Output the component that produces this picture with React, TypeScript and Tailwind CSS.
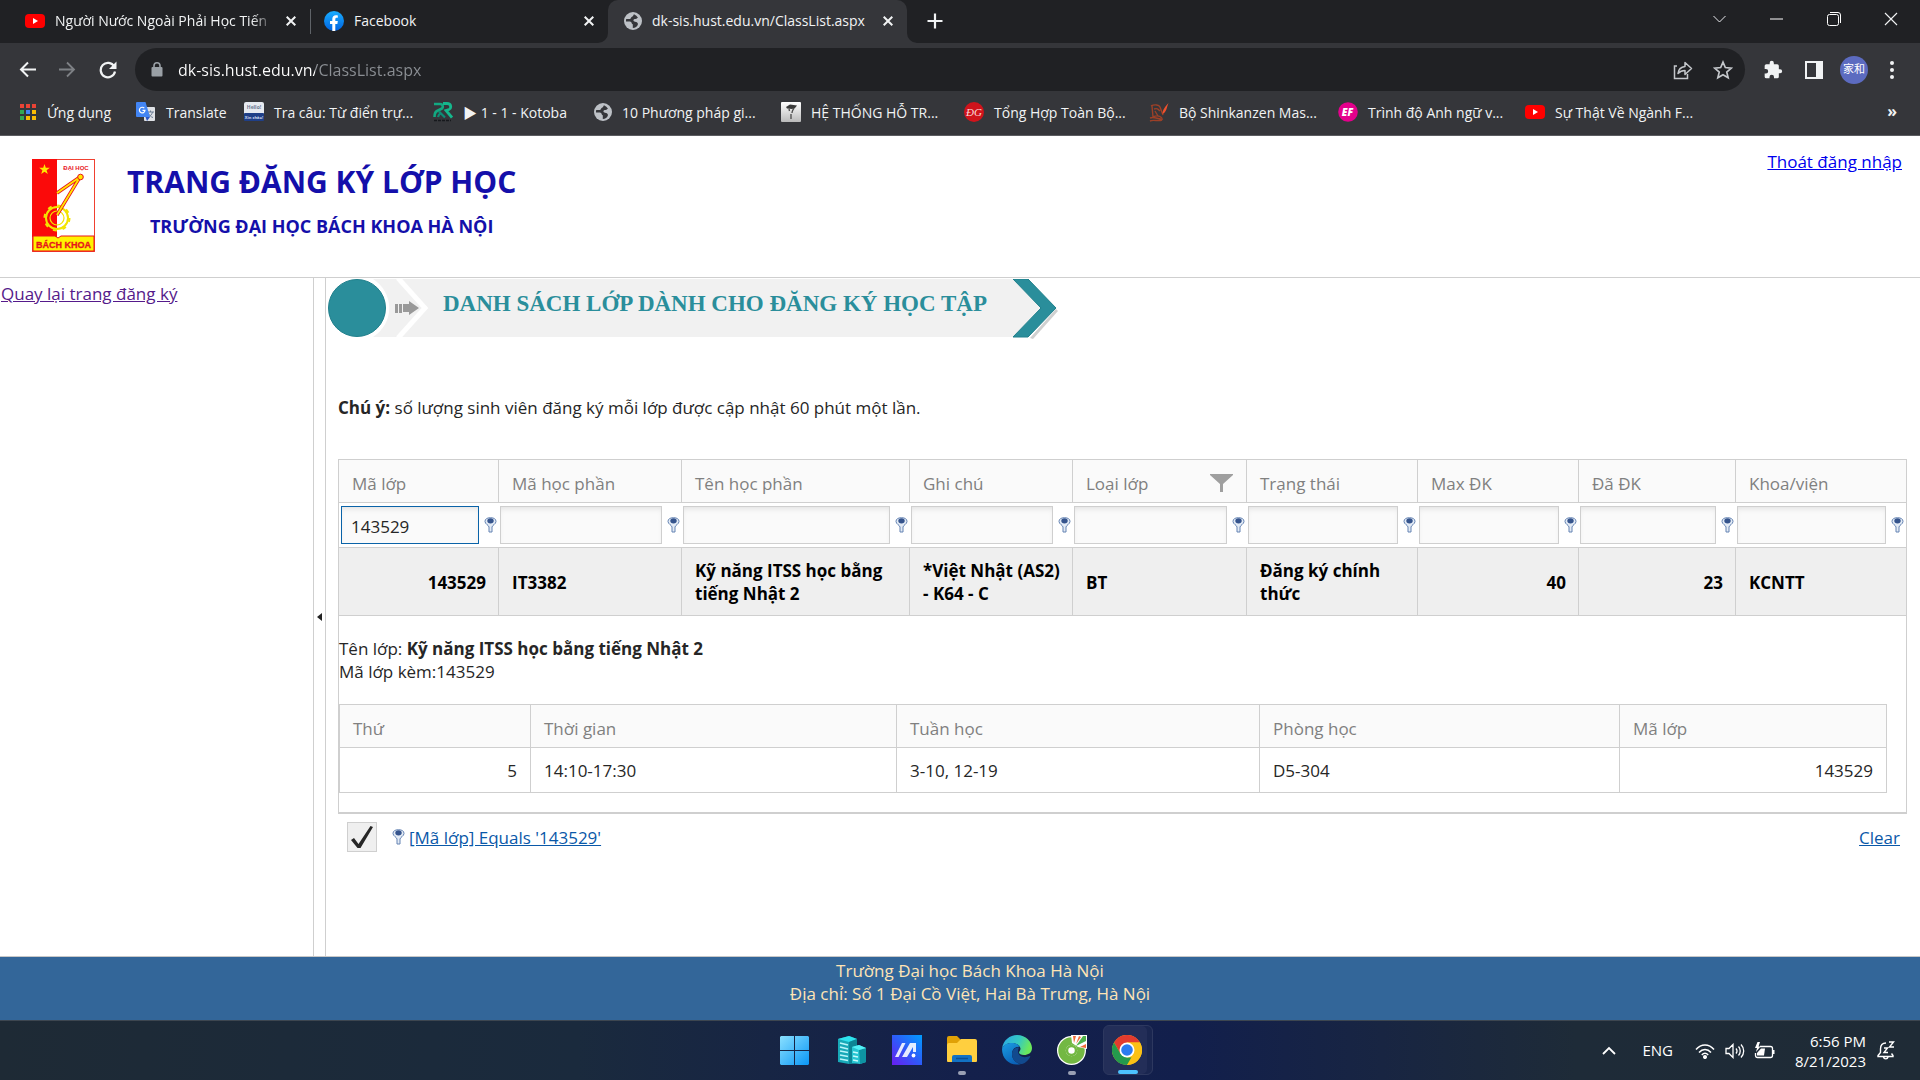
import React from 'react';

const UI = "font-['Open_Sans','Noto_Sans_CJK_JP',sans-serif]";

function YouTubeIcon() {
  return (
    <svg width="20" height="16" viewBox="0 0 20 16" className="shrink-0">
      <rect x="0" y="1" width="20" height="14" rx="4" fill="#f00" />
      <path d="M8 5l5 3-5 3z" fill="#fff" />
    </svg>
  );
}

function FacebookIcon() {
  return (
    <svg width="20" height="20" viewBox="0 0 20 20" className="shrink-0">
      <defs>
        <linearGradient id="fb" x1="0" y1="0" x2="0" y2="1">
          <stop offset="0" stopColor="#19aeff" />
          <stop offset="1" stopColor="#0062e0" />
        </linearGradient>
      </defs>
      <circle cx="10" cy="10" r="10" fill="url(#fb)" />
      <path
        d="M8.3 20v-7H6v-3h2.300V8c0-2.500 1.400-3.800 3.600-3.800.9 0 1.900.2 1.900.2v2.400h-1.100c-1.100 0-1.400.7-1.400 1.400V10h2.500l-.4 3h-2.100v7z"
        fill="#fff"
      />
    </svg>
  );
}

function GlobeIcon() {
  return (
    <svg width="18" height="18" viewBox="0 0 18 18" className="shrink-0">
      <circle cx="9" cy="9" r="9" fill="#bdc1c6" />
      <path
        d="M10 2.200c-1 1-.5 1.800-2 2.600-1.300.6-.8 1.700-2 2.100-1.400.4-2.300 0-3.800 0A7 7 0 0 0 2 9.500c1.500.2 4-.3 5 .5 1.200 1 .4 2 1.800 2.300V16c2.700 0 4.300-1.500 5-3.300.5-1.500-.5-2.400-1.800-2.700-1.500-.4-2-.4-2.500-1.300-.5-1 .7-1.700 2-1.700 1.500 0 1.300-1 2.500-1.200A7.500 7.500 0 0 0 10 2.200z"
        fill="#35363a"
      />
    </svg>
  );
}

function AppsIcon() {
  const colors = ['#ea4335', '#ea4335', '#ea4335', '#34a853', '#4285f4', '#fbbc04', '#34a853', '#fbbc04', '#fbbc04'];
  return (
    <svg width="18" height="18" viewBox="0 0 18 18" className="shrink-0">
      {colors.map((c, i) => (
        <rect key={i} x={1 + (i % 3) * 6} y={1 + Math.floor(i / 3) * 6} width="4" height="4" fill={c} />
      ))}
    </svg>
  );
}

function TranslateIcon() {
  return (
    <svg width="20" height="20" viewBox="0 0 20 20" className="shrink-0">
      <rect x="8" y="5" width="11" height="14" rx="1" fill="#dfe2e6" />
      <path d="M11 10h7M14.500 8.500V10M16.500 10c-.5 2.500-2.500 4.500-4.500 5.500M12.500 11.500c1 2 2.500 3.500 4.500 4" stroke="#6b7c93" strokeWidth="1" fill="none" />
      <path d="M1 0h8.500l4.500 15H1a1 1 0 0 1-1-1V1a1 1 0 0 1 1-1z" fill="#4285f4" />
      <path d="M9.500 15H14l-3 4z" fill="#2a56c6" />
      <path d="M8.300 6.200A2.800 2.800 0 1 0 9 8.300H6.500" stroke="#fff" strokeWidth="1.200" fill="none" />
    </svg>
  );
}

function HelloIcon() {
  return (
    <svg width="20" height="20" viewBox="0 0 20 20" className="shrink-0">
      <rect x="0" y="0" width="20" height="13" rx="2" fill="#e6eaf0" />
      <rect x="0" y="11" width="20" height="8" rx="1" fill="#1f3f87" />
      <text x="10" y="7" fontSize="5" textAnchor="middle" fill="#6a7890" fontFamily="Open Sans" fontWeight="700">Hello!</text>
      <text x="10" y="17" fontSize="4" textAnchor="middle" fill="#d6def0" fontFamily="Open Sans" fontWeight="700">Xin chào!</text>
    </svg>
  );
}

function KotobaIcon() {
  return (
    <svg width="20" height="20" viewBox="0 0 20 20" className="shrink-0" fill="none">
      <path d="M1 2h6c3 0 4 3.500 1 5L4 9c-2 1-2.500 3-2.500 6" stroke="#12a981" strokeWidth="2.600" />
      <path d="M10 1.500h4c4.500 0 4.500 5 2 6L13 8.500l6 7" stroke="#15b88d" strokeWidth="2.800" />
      <path d="M6 9.500l6 6M5 15c.5-2 1-3 2.500-3.500" stroke="#0d8d76" strokeWidth="2.200" />
      <path d="M1 18.500h17" stroke="#16181c" strokeWidth="1.500" strokeDasharray="3 1" />
    </svg>
  );
}

function SupportIcon() {
  return (
    <svg width="20" height="20" viewBox="0 0 20 20" className="shrink-0">
      <defs>
        <linearGradient id="sup" x1="0" y1="0" x2="0" y2="1">
          <stop offset="0" stopColor="#fff" />
          <stop offset="1" stopColor="#b9b9b9" />
        </linearGradient>
      </defs>
      <rect width="20" height="20" rx="1" fill="url(#sup)" />
      <path d="M5 5l4-2.500 7 1-2 2.500-3 1-5-.5z" fill="#3a3a3a" />
      <path d="M8 7l.5 2M13 6c-1 2-2 3-2 5M10 12v5" stroke="#4a4a4a" strokeWidth="1.300" fill="none" />
    </svg>
  );
}

function DgIcon() {
  return (
    <svg width="20" height="20" viewBox="0 0 20 20" className="shrink-0">
      <circle cx="10" cy="10" r="10" fill="#d0131b" />
      <text x="10" y="14" fontSize="11" textAnchor="middle" fill="#fbd9d9" fontFamily="Liberation Serif" fontStyle="italic">ĐG</text>
    </svg>
  );
}

function ShinkanzenIcon() {
  return (
    <svg width="20" height="20" viewBox="0 0 20 20" className="shrink-0" fill="none">
      <path d="M2 4c4-2 8-1 9 1l3 8M3 4l1 11c4-2 7-1 9 1M5 7c3-1 4 0 6 2M1 16c5-2 8 2 13 1M1 19c4-2 8 1 12-1M6 9l3 5" stroke="#9c4027" strokeWidth="1.400" />
      <path d="M19.500 1c-2 5-2 9-6 11 0-4 3-8 6-11z" fill="#f0512d" />
    </svg>
  );
}

function EfIcon() {
  return (
    <svg width="20" height="20" viewBox="0 0 20 20" className="shrink-0">
      <circle cx="10" cy="10" r="9.800" fill="#e4008c" />
      <text x="9.500" y="13.500" fontSize="10" textAnchor="middle" fill="#fff" fontFamily="Open Sans" fontStyle="italic" fontWeight="800">EF</text>
    </svg>
  );
}

function Cross({ size = 10, stroke = 2 }: { size?: number; stroke?: number }) {
  return (
    <svg width={size} height={size} viewBox="0 0 10 10" stroke="#f1f3f4" strokeWidth={stroke} fill="none">
      <path d="M0.700 0.700l8.600 8.600M9.300 0.700l-8.600 8.600" />
    </svg>
  );
}

function TabStrip() {
  return (
    <div className="flex h-[43px] items-stretch bg-[#202124] text-[14px] text-[#f1f3f4]">
      <div className="flex w-[310px] items-center pb-[2px] pl-[25px]">
        <YouTubeIcon />
        <span className="ml-[10px] w-[219px] whitespace-nowrap [mask-image:linear-gradient(to_right,#000_90%,transparent)]">
          Người Nước Ngoài Phải Học Tiến
        </span>
        <button aria-label="Close tab" className="ml-3 flex">
          <Cross />
        </button>
      </div>
      <div className="my-[9px] w-px bg-[#5f6368]" />
      <div className="flex w-[297px] items-center pr-[14px] pb-[2px] pl-[13px]">
        <FacebookIcon />
        <span className="ml-[10px] flex-1">Facebook</span>
        <button aria-label="Close tab" className="flex">
          <Cross />
        </button>
      </div>
      <div className="relative flex w-[299px] items-center rounded-t-[10px] bg-[#35363a] pr-[14px] pb-[2px] pl-4">
        <svg className="absolute bottom-0 -left-[10px]" width="10" height="10"><path d="M10 0v10H0A10 10 0 0 0 10 0z" fill="#35363a" /></svg>
        <svg className="absolute -right-[10px] bottom-0" width="10" height="10"><path d="M0 0v10h10A10 10 0 0 1 0 0z" fill="#35363a" /></svg>
        <GlobeIcon />
        <span className="ml-[10px] flex-1">dk-sis.hust.edu.vn/ClassList.aspx</span>
        <button aria-label="Close tab" className="flex">
          <Cross />
        </button>
      </div>
      <button aria-label="New tab" className="flex items-center px-5 pb-[2px]">
        <svg width="16" height="16" viewBox="0 0 16 16" stroke="#f1f3f4" strokeWidth="2.200"><path d="M8 0.500v15M0.500 8h15" /></svg>
      </button>
      <div className="mr-px ml-auto flex h-[37px] items-center">
        <button aria-label="Search tabs" className="flex w-[58px] justify-center">
          <svg width="13" height="8" viewBox="0 0 13 8" stroke="#e8eaed" fill="none"><path d="M0.500 1l6 6 6-6" /></svg>
        </button>
        <button aria-label="Minimize" className="flex w-[57px] justify-center">
          <svg width="13" height="2" viewBox="0 0 13 2"><path d="M0 1h13" stroke="#fff" /></svg>
        </button>
        <button aria-label="Restore" className="flex w-[57px] justify-center">
          <svg width="14" height="14" viewBox="0 0 14 14" stroke="#fff" fill="none"><rect x="0.500" y="2.500" width="11" height="11" rx="2" /><path d="M3 0.500h8q2.500 0 2.500 2.500v8" /></svg>
        </button>
        <button aria-label="Close" className="flex w-[57px] justify-center">
          <Cross size={14} stroke={0.8} />
        </button>
      </div>
    </div>
  );
}

function Toolbar() {
  return (
    <div className="flex h-[53px] items-center bg-[#35363a]">
      <div className="flex w-[135px] items-center">
        <button aria-label="Back" className="ml-[19px]">
          <svg width="17" height="17" viewBox="0 0 17 17" stroke="#f1f3f4" strokeWidth="2" fill="none"><path d="M17 8.500H2M9 1.500l-7 7 7 7" /></svg>
        </button>
        <button aria-label="Forward" className="ml-[23px]">
          <svg width="17" height="17" viewBox="0 0 17 17" stroke="#7e8185" strokeWidth="1.800" fill="none"><path d="M0 8.500h15M8 1.500l7 7-7 7" /></svg>
        </button>
        <button aria-label="Reload" className="ml-[23px]">
          <svg width="18" height="18" viewBox="0 0 18 18" fill="none"><path d="M15.200 5.500A7.200 7.200 0 1 0 16 10.500" stroke="#f1f3f4" strokeWidth="2.200" /><path d="M17.500 0.500v7.500H10z" fill="#f1f3f4" /></svg>
        </button>
      </div>
      <div className="flex h-[43px] flex-1 items-center rounded-full bg-[#202124] pr-[12px] pl-4">
        <svg width="12" height="15" viewBox="0 0 12 15" className="shrink-0"><rect x="0.500" y="5" width="11" height="9.500" rx="1" fill="#9aa0a6" /><path d="M3 6V3.800a3 3 0 0 1 6 0V6" stroke="#9aa0a6" strokeWidth="1.600" fill="none" /></svg>
        <input
          aria-label="Address"
          defaultValue="dk-sis.hust.edu.vn/ClassList.aspx"
          className="ml-[15px] min-w-0 flex-1 bg-[linear-gradient(to_right,#fff_137px,#8b8f94_137px)] bg-clip-text text-[16px] leading-6 text-transparent caret-white outline-none"
        />
        <button aria-label="Share">
          <svg width="20" height="20" viewBox="0 0 20 20" stroke="#c4c7cb" strokeWidth="1.500" fill="none"><path d="M4 6H1.500v12.500h13V14" /><path d="M5 13.500c.5-4.500 3-6.500 7-7V2.500l6.500 6-6.500 6v-4c-3 0-5 .8-7 3z" strokeLinejoin="round" /></svg>
        </button>
        <button aria-label="Bookmark this page" className="ml-5">
          <svg width="20" height="20" viewBox="0 0 24 24" stroke="#c4c7cb" strokeWidth="2" fill="none"><path d="M12 2.500l2.800 6.600 7.200.6-5.500 4.700 1.700 7L12 17.700l-6.200 3.700 1.700-7L2 9.700l7.200-.6z" /></svg>
        </button>
      </div>
      <button aria-label="Extensions" className="ml-[18px]">
        <svg width="20" height="20" viewBox="0 0 24 24" fill="#f1f3f4"><path d="M20.500 11H19V7a2 2 0 0 0-2-2h-4V3.500a2.500 2.500 0 0 0-5 0V5H4a2 2 0 0 0-2 2v3.800h1.500a2.700 2.700 0 0 1 0 5.400H2V20a2 2 0 0 0 2 2h3.800v-1.500a2.700 2.700 0 0 1 5.400 0V22H17a2 2 0 0 0 2-2v-4h1.500a2.500 2.500 0 0 0 0-5z" /></svg>
      </button>
      <button aria-label="Side panel" className="ml-[22px]">
        <svg width="18" height="18" viewBox="0 0 18 18"><rect x="1" y="1" width="16" height="16" fill="none" stroke="#f1f3f4" strokeWidth="2" /><rect x="11" y="1" width="6" height="16" fill="#f1f3f4" /></svg>
      </button>
      <button className="ml-[17px] flex size-7 items-center justify-center rounded-full bg-[#5c6bc0] text-[11px] text-white">家和</button>
      <button aria-label="Menu" className="mr-[26px] ml-[22px]">
        <svg width="4" height="18" viewBox="0 0 4 18" fill="#f1f3f4"><circle cx="2" cy="2" r="2" /><circle cx="2" cy="9" r="2" /><circle cx="2" cy="16" r="2" /></svg>
      </button>
    </div>
  );
}

const bookmarks = [
  { label: 'Ứng dụng', icon: <AppsIcon />, width: 'w-[117px]' },
  { label: 'Translate', icon: <TranslateIcon />, width: 'w-[108px]' },
  { label: 'Tra câu: Từ điển trự...', icon: <HelloIcon />, width: 'w-[189px]' },
  { label: '▶ 1 - 1 - Kotoba', icon: <KotobaIcon />, width: 'w-[161px]' },
  { label: '10 Phương pháp gi...', icon: <GlobeIcon />, width: 'w-[187px]' },
  { label: 'HỆ THỐNG HỖ TR...', icon: <SupportIcon />, width: 'w-[183px]' },
  { label: 'Tổng Hợp Toàn Bộ...', icon: <DgIcon />, width: 'w-[185px]' },
  { label: 'Bộ Shinkanzen Mas...', icon: <ShinkanzenIcon />, width: 'w-[189px]' },
  { label: 'Trình độ Anh ngữ v...', icon: <EfIcon />, width: 'w-[187px]' },
  { label: 'Sự Thật Về Ngành F...', icon: <YouTubeIcon />, width: 'w-[200px]' },
];

function BookmarkBar() {
  return (
    <div className="flex h-[40px] items-start border-b border-[#5b5c60] bg-[#35363a] pl-[19px] text-[14px] text-[#f1f3f4]">
      {bookmarks.map((b) => (
        <a key={b.label} href="#" className={'flex h-[32px] shrink-0 items-center gap-[10px] whitespace-nowrap ' + b.width}>
          {b.icon}
          {b.label}
        </a>
      ))}
      <button aria-label="More bookmarks" className="mr-[23px] ml-auto h-[30px] text-[16px] font-bold">»</button>
    </div>
  );
}

function UniversityLogo() {
  return (
    <svg width="63" height="93" viewBox="0 0 63 93">
      <rect x="0.500" y="0.500" width="62" height="92" fill="#fff" stroke="#f04030" />
      <path d="M0 0h25v78H0z" fill="#fb0a0a" />
      <path d="M12.500 5l1.300 3.800h4l-3.200 2.400 1.200 3.800-3.300-2.300L9.200 15l1.200-3.800L7.200 8.800h4z" fill="#ffe800" />
      <text x="44" y="11" fontSize="6" textAnchor="middle" fill="#e8141c" fontFamily="Liberation Sans" fontWeight="700">ĐẠI HỌC</text>
      <circle cx="25" cy="59" r="11" fill="none" stroke="#f3e400" strokeWidth="2" />
      <circle cx="25" cy="59" r="12.500" fill="none" stroke="#f3e400" strokeWidth="2" strokeDasharray="4 5.800" />
      <circle cx="25" cy="59" r="7" fill="none" stroke="#f3e400" strokeWidth="1.200" />
      <path d="M25 34l23-16L25 56" fill="none" stroke="#e8141c" strokeWidth="3.400" />
      <path d="M25 34l23-16L25 56" fill="none" stroke="#ffe800" strokeWidth="1.800" />
      <circle cx="48.500" cy="18" r="2.800" fill="#ffe800" stroke="#e8141c" strokeWidth="1" />
      <path d="M1 77h22l3 2 3-2h33v15H1z" fill="#fff200" stroke="#e8141c" strokeWidth="1" />
      <text x="31.500" y="89" fontSize="9" textAnchor="middle" fill="#e8141c" stroke="#e8141c" strokeWidth="0.300" fontFamily="Liberation Sans" fontWeight="700">BÁCH KHOA</text>
    </svg>
  );
}

function PageHeader() {
  return (
    <header className="flex h-[142px] items-start border-b border-[#cfcfcf] bg-white">
      <div className="mt-[23px] ml-8">
        <UniversityLogo />
      </div>
      <div className="ml-8 pt-[23px] text-center font-bold text-[#140faa]">
        <h1 className="text-[30px] leading-[46px]">TRANG ĐĂNG KÝ LỚP HỌC</h1>
        <h2 className="text-[18px] leading-[42px]">TRƯỜNG ĐẠI HỌC BÁCH KHOA HÀ NỘI</h2>
      </div>
      <a href="#" className="mt-[14px] mr-[18px] ml-auto text-[17px] leading-[23px] text-[#0000ee] underline">Thoát đăng nhập</a>
    </header>
  );
}

function Banner() {
  return (
    <div className="flex h-[62px] items-start pt-[1px] pl-px">
      <svg width="102" height="60" viewBox="0 0 102 60" className="shrink-0">
        <path d="M30 0h72v58H30z" fill="#f1f1f1" />
        <circle cx="30" cy="29" r="34" fill="#fff" />
        <path d="M46 0h22l27 29-27 29H46a34 34 0 0 0 0-58z" fill="#f1f1f1" />
        <path d="M71 -1l27 30-27 30" fill="none" stroke="#fff" strokeWidth="5" />
        <circle cx="30" cy="29" r="28.500" fill="#2a8e9b" stroke="#21808c" />
        <path d="M68 25h3v9h-3zM72 25h3v9h-3zM76 25h6v-3l10 7-10 7v-3h-6z" fill="#999" />
      </svg>
      <h3 className="h-[58px] w-[584px] bg-[#f1f1f1] pl-[14px] font-['Liberation_Serif',serif] text-[23px] leading-[50px] font-bold whitespace-nowrap text-[#2a8e9b]">
        DANH SÁCH LỚP DÀNH CHO ĐĂNG KÝ HỌC TẬP
      </h3>
      <svg width="48" height="62" viewBox="0 0 48 62" className="shrink-0">
        <path d="M0 0h3l28 29L3 58H0z" fill="#f1f1f1" />
        <path d="M17 59l26-29 2 2-25 28z" fill="#d0d0d0" />
        <path d="M0 0h15l28 29-28 29H0l28-29z" fill="#2a8e9b" stroke="#21808c" />
      </svg>
    </div>
  );
}

function FilterPin() {
  return (
    <svg width="13" height="16" viewBox="0 0 13 16" className="shrink-0">
      <path d="M1 4.500C1 2 3 0.700 6.500 0.700S12 2 12 4.500C12 7 8 8.500 8 10v5H5v-5C5 8.500 1 7 1 4.500z" fill="#e3ebf5" stroke="#6483b3" />
      <ellipse cx="6.500" cy="3.800" rx="3.200" ry="2.600" fill="#35548d" />
    </svg>
  );
}

const columns = [
  { title: 'Mã lớp', width: 'w-[160px]', value: '143529', right: true },
  { title: 'Mã học phần', width: 'w-[183px]', value: 'IT3382' },
  { title: 'Tên học phần', width: 'w-[228px]', value: 'Kỹ năng ITSS học bằng tiếng Nhật 2' },
  { title: 'Ghi chú', width: 'w-[163px]', value: '*Việt Nhật (AS2) - K64 - C' },
  { title: 'Loại lớp', width: 'w-[174px]', value: 'BT', filter: true },
  { title: 'Trạng thái', width: 'w-[171px]', value: 'Đăng ký chính thức' },
  { title: 'Max ĐK', width: 'w-[161px]', value: '40', right: true },
  { title: 'Đã ĐK', width: 'w-[157px]', value: '23', right: true },
  { title: 'Khoa/viện', width: 'w-[171px]', value: 'KCNTT' },
];

const schedule = [
  { title: 'Thứ', width: 'w-[191px]', value: '5', right: true },
  { title: 'Thời gian', width: 'w-[366px]', value: '14:10-17:30' },
  { title: 'Tuần học', width: 'w-[363px]', value: '3-10, 12-19' },
  { title: 'Phòng học', width: 'w-[360px]', value: 'D5-304' },
  { title: 'Mã lớp', width: 'w-[267px]', value: '143529', right: true },
];

function ScheduleTable() {
  return (
    <div className="mr-[20px]">
      <table className="w-full table-fixed border-collapse">
        <colgroup>
          {schedule.map((c) => (
            <col key={c.title} className={c.width} />
          ))}
        </colgroup>
        <thead>
          <tr className="h-[43px] bg-[#fafafa] text-[#808080]">
            {schedule.map((c) => (
              <th key={c.title} className="border border-[#cfcfcf] px-[13px] pt-1 text-left font-normal">{c.title}</th>
            ))}
          </tr>
        </thead>
        <tbody>
          <tr className="h-[45px]">
            {schedule.map((c) => (
              <td key={c.title} className={'border border-[#cfcfcf] px-[13px] pt-px ' + (c.right ? 'text-right' : 'text-left')}>{c.value}</td>
            ))}
          </tr>
        </tbody>
      </table>
    </div>
  );
}

function ClassTable() {
  return (
    <table className="w-full table-fixed border-collapse text-[17px] leading-[23px]">
      <colgroup>
        {columns.map((c) => (
          <col key={c.title} className={c.width} />
        ))}
      </colgroup>
      <thead>
        <tr className="h-[43px] bg-[#fafafa] text-[#808080]">
          {columns.map((c) => (
            <th key={c.title} className="border border-[#cfcfcf] px-[13px] pt-1 text-left font-normal">
              <div className="flex items-center justify-between">
                {c.title}
                {c.filter && (
                  <button aria-label="Filter">
                    <svg width="23" height="18" viewBox="0 0 23 18"><path d="M0 0h23v1l-10 9v8h-3v-8L0 1z" fill="#9f9f9f" /></svg>
                  </button>
                )}
              </div>
            </th>
          ))}
        </tr>
        <tr className="h-[45px]">
          {columns.map((c, i) => (
            <td key={c.title} className="border-b border-[#cfcfcf] p-0 pl-px first:border-l first:pl-[2px] last:border-r">
              <div className="flex items-center gap-[5px] pr-[2px]">
                <input
                  aria-label={'Filter ' + c.title}
                  defaultValue={i === 0 ? '143529' : ''}
                  className={
                    'h-[38px] min-w-0 flex-1 border bg-[#fafafa] pt-[3px] pl-[9px] shadow-[inset_0_4px_6px_-3px_rgba(0,0,0,0.12)] outline-none ' +
                    (i === 0 ? 'border-[#0a63a8]' : 'border-[#cfcfcf]')
                  }
                />
                <button aria-label="Filter condition">
                  <FilterPin />
                </button>
              </div>
            </td>
          ))}
        </tr>
      </thead>
      <tbody>
        <tr className="h-[68px] bg-[#efefef] text-black">
          {columns.map((c) => (
            <td key={c.title} className={'border border-[#cfcfcf] pt-px pl-[13px] font-bold ' + (c.right ? 'pr-3 text-right' : 'pr-[6px] text-left')}>
              {c.value}
            </td>
          ))}
        </tr>
        <tr>
          <td colSpan={9} className="border border-b-2 border-[#cfcfcf] p-0 pt-[21px] pb-[19px]">
            <p>Tên lớp: <b>Kỹ năng ITSS học bằng tiếng Nhật 2</b></p>
            <p className="mb-[21px]">Mã lớp kèm:143529</p>
            <ScheduleTable />
          </td>
        </tr>
      </tbody>
    </table>
  );
}

function FilterBar() {
  return (
    <div className="mt-[8px] flex items-center pl-[9px] text-[16px] leading-[23px] text-[#0a58a8]">
      <label className="relative flex h-[30px] w-[30px] items-center justify-center border border-[#cfcfcf] bg-[#efefef]">
        <input type="checkbox" defaultChecked aria-label="Filter enabled" className="absolute inset-0 cursor-pointer appearance-none" />
        <svg width="24" height="24" viewBox="0 0 24 24"><path d="M1 15l3-2 4.500 6L20.500 1l2.500 1L10.500 23H7.500z" fill="#262626" /></svg>
      </label>
      <span className="mr-[4px] ml-[15px]"><FilterPin /></span>
      <a href="#" className="text-[17px] underline">[Mã lớp] Equals '143529'</a>
      <a href="#" className="mr-[7px] ml-auto text-[17px] underline">Clear</a>
    </div>
  );
}

function WindowsLogo() {
  return (
    <svg width="29" height="29" viewBox="0 0 29 29">
      <defs>
        <linearGradient id="win" x1="0" y1="0" x2="1" y2="1">
          <stop offset="0" stopColor="#8ae0ff" />
          <stop offset="1" stopColor="#0a96f5" />
        </linearGradient>
      </defs>
      <path d="M1 0h13v14H0V1zM15 0h13l1 1v13H15zM0 15h14v14H1l-1-1zM15 15h14v13l-1 1H15z" fill="url(#win)" />
    </svg>
  );
}

function ServerIcon() {
  return (
    <svg width="30" height="30" viewBox="0 0 30 30">
      <path d="M1 4l11-3 8 3v24l-8 1-11-2z" fill="#18a9b8" />
      <path d="M1 4l11-3 8 3-8 3z" fill="#2fe3ee" />
      <path d="M12 7l8-3v24l-8 1z" fill="#0d8595" />
      <path d="M3 8l8 2M3 12l8 2M3 16l8 1.500M3 20l8 1.500M3 24l8 1.500" stroke="#b9f6fa" strokeWidth="1.600" />
      <path d="M15 12l7-2 7 3v14l-6 2-8-1z" fill="#27c5d2" />
      <path d="M22 15l7-2v14l-6 2z" fill="#0e93a2" />
      <path d="M15 12l7-2 7 3-7 2z" fill="#53f0f7" />
      <path d="M16 17l5 1M16 21l5 1M16 25l5 1" stroke="#c7fbfd" strokeWidth="1.500" />
    </svg>
  );
}

function MyAsusIcon() {
  return (
    <svg width="30" height="30" viewBox="0 0 30 30">
      <defs>
        <linearGradient id="asus" x1="0" y1="1" x2="1" y2="0">
          <stop offset="0" stopColor="#6a1cf0" />
          <stop offset="0.500" stopColor="#2e5bf8" />
          <stop offset="1" stopColor="#009dff" />
        </linearGradient>
      </defs>
      <rect width="30" height="30" fill="url(#asus)" />
      <path d="M3 22L10 8h3.500l-7 14zM10 22l8-14h6v9h-3v-5l-6 10z" fill="#fff" opacity="0.880" />
      <circle cx="21.500" cy="20.500" r="1.900" fill="#fff" />
    </svg>
  );
}

function ExplorerIcon() {
  return (
    <svg width="30" height="28" viewBox="0 0 30 28">
      <path d="M0 2q0-2 2-2h8l4 4h14v6H0z" fill="#e0a106" />
      <path d="M0 9q0-2 2-2h8l4-4h14q2 0 2 2v20q0 1-1 1H1q-1 0-1-1z" fill="#ffcf3f" />
      <path d="M5 26v-5q0-2 2-2h16q2 0 2 2v5z" fill="#1272c4" />
      <path d="M9 22.500h12" stroke="#0b4f94" strokeWidth="1.500" />
    </svg>
  );
}

function EdgeIcon() {
  return (
    <svg width="30" height="30" viewBox="0 0 30 30">
      <defs>
        <linearGradient id="edgeTop" x1="0" y1="0" x2="1" y2="0.300">
          <stop offset="0" stopColor="#2aa6e8" />
          <stop offset="0.600" stopColor="#35c9c2" />
          <stop offset="1" stopColor="#6be85c" />
        </linearGradient>
        <linearGradient id="edgeLow" x1="0" y1="0" x2="0.500" y2="1">
          <stop offset="0" stopColor="#1b9de2" />
          <stop offset="1" stopColor="#0b62b8" />
        </linearGradient>
      </defs>
      <path d="M0 14C1 5 8 0 15 0c9 0 15 7 15 13 0 5-4 7-8 7-3 0-5-1-5-2.500 0-1 1.500-1.500 1.500-4C18 10 14 8 9.500 8 5 8 1.500 10.500 0 14z" fill="url(#edgeTop)" />
      <path d="M0 14c1.500-4 5-6 9.500-6 4 0 7 1.500 8.500 4-4-1-8 2-8 7 0 6 5 9.500 9 10-10 2.500-19-4-19-15z" fill="url(#edgeLow)" />
      <path d="M10 19c0-4 3-7 7-6.500-1 2-1.500 5 0 7 2.500 3.500 8 3 10.500 1.500.6-.3 1 .2.600.9C26 26 22 29 19 29c-4-.5-9-4-9-10z" fill="#124a8e" />
    </svg>
  );
}

function CocCocIcon() {
  return (
    <svg width="30" height="30" viewBox="0 0 30 30">
      <circle cx="14.500" cy="15.500" r="14.500" fill="#fff" />
      <circle cx="14.500" cy="15.500" r="9.500" fill="none" stroke="#73b843" strokeWidth="7.500" />
      <circle cx="14.500" cy="15.500" r="4.500" fill="#fff" stroke="#73b843" strokeWidth="2.500" />
      <path d="M14 0h16v14l-9-2-6-4z" fill="#fff" />
      <path d="M16 1h3l-2 7z" fill="#f26b3a" />
      <path d="M29 1v5l-10 5 7-10z" fill="#4fb24a" />
      <path d="M22 1l2 1-5 7z" fill="#f26b3a" />
      <path d="M29 9v4l-6-1z" fill="#f26b3a" />
    </svg>
  );
}

function ChromeLogo() {
  return (
    <svg width="30" height="30" viewBox="0 0 30 30">
      <circle cx="15" cy="15" r="15" fill="#fbc116" />
      <path d="M2 7.500A15 15 0 0 1 28 7.500H15L8.500 18.700z" fill="#e33b2e" />
      <path d="M2 7.500l6.500 11.200 6.500 3.800h6.500L15 30A15 15 0 0 1 2 7.500z" fill="#249a4d" />
      <path d="M15 7.500h13A15 15 0 0 1 15 30l6.500-11.200z" fill="#fbc116" />
      <circle cx="15" cy="15" r="7.500" fill="#fff" />
      <circle cx="15" cy="15" r="5.800" fill="#2a7bf0" />
    </svg>
  );
}

const taskApps = [
  { name: 'Servers', icon: <ServerIcon />, mark: '' },
  { name: 'MyASUS', icon: <MyAsusIcon />, mark: '' },
  { name: 'File Explorer', icon: <ExplorerIcon />, mark: 'w-2 bg-[#9aa0b4]' },
  { name: 'Edge', icon: <EdgeIcon />, mark: '' },
  { name: 'Coc Coc', icon: <CocCocIcon />, mark: 'w-2 bg-[#9aa0b4]' },
];

function Taskbar() {
  return (
    <div className="grid h-[60px] grid-cols-[1fr_auto_1fr] items-center border-t border-[#3d4650] bg-[linear-gradient(to_right,#1e2a35_0%,#1a2a3d_30%,#14204b_50%,#121f4c_62%,#1e2b38_82%,#1f2b36_100%)] text-white">
      <div />
      <div className="flex h-full items-center pb-px">
        <button aria-label="Start" className="flex h-full w-[57px] items-center pl-3">
          <WindowsLogo />
        </button>
        {taskApps.map((a) => (
          <button key={a.name} aria-label={a.name} className="relative flex h-full w-[55px] items-center justify-center">
            {a.icon}
            {a.mark && <span className={'absolute bottom-1 h-1 rounded-full ' + a.mark} />}
          </button>
        ))}
        <button aria-label="Chrome" className="relative ml-[3px] flex h-[50px] w-[50px] items-center justify-center rounded-md border border-[#2d385f] bg-[#232e58] pr-px shadow-[inset_-5px_0_0_#1a2650]">
          <ChromeLogo />
          <span className="absolute bottom-0 left-[14px] h-1 w-5 rounded-full bg-[#4cc2ff]" />
        </button>
      </div>
      <div className="flex items-center justify-end pr-[25px]">
        <svg width="14" height="9" viewBox="0 0 14 9" stroke="#fff" strokeWidth="1.800" fill="none"><path d="M1 8l6-6 6 6" /></svg>
        <span className="ml-[26px] text-[15px]">ENG</span>
        <svg className="ml-[22px]" width="20" height="16" viewBox="0 0 20 16" stroke="#fff" strokeWidth="1.500" fill="none">
          <path d="M1 6.500c5-6 13-6 18 0M4 9.500c3.500-4 8.500-4 12 0M6.800 12c2-2.200 4.400-2.200 6.400 0" />
          <circle cx="10" cy="14" r="1.300" fill="#fff" />
        </svg>
        <svg className="ml-[10px]" width="20" height="16" viewBox="0 0 20 16" stroke="#fff" strokeWidth="1.300" fill="none">
          <path d="M1 5.500h3l4-4v13l-4-4H1zM11 5.500c1.200 1.500 1.200 3.500 0 5M13.500 3.500c2.300 2.500 2.300 6.500 0 9M16 1.500c3.600 3.800 3.600 9.200 0 13" />
        </svg>
        <svg className="ml-[9px]" width="21" height="17" viewBox="0 0 21 17" fill="none">
          <path d="M6 4.500h10.500q2 0 2 2v7q0 2-2 2h-13q-2 0-2-2V11" stroke="#fff" strokeWidth="1.300" />
          <path d="M19.500 8v4" stroke="#fff" strokeWidth="2" />
          <path d="M3.500 0L1 6h2L2 10l4.500-5.500H4.500L6 0z" fill="#fff" />
          <path d="M3 13.500V11l4-4.500h4l-1 7z" fill="#fff" />
        </svg>
        <div className="ml-[20px] text-right text-[15px] leading-5">
          <div>6:56 PM</div>
          <div>8/21/2023</div>
        </div>
        <svg className="ml-[11px]" width="18" height="19" viewBox="0 0 18 19" stroke="#fff" strokeWidth="1.400" fill="none">
          <path d="M9 2C5 2 3.500 4.500 3.500 8v3.500L1 14.500v1h15v-1l-1.500-2M6.500 16c.5 2.500 4 2.500 4.500 0" />
          <path d="M12 1h4.500L12.500 6H17M7 7h3.500L7 11.500h4" />
        </svg>
      </div>
    </div>
  );
}

export default function App() {
  return (
    <div className={'flex min-h-screen flex-col bg-white text-[#262626] ' + UI}>
      <TabStrip />
      <Toolbar />
      <BookmarkBar />
      <PageHeader />
      <div className="flex flex-1">
        <aside className="w-[313px] pt-[4px] pl-px text-[17px] leading-[23px]">
          <a href="#" className="text-[#551a8b] underline">Quay lại trang đăng ký</a>
        </aside>
        <div className="flex w-[13px] items-center justify-center border-x border-[#cfcfcf]">
          <button aria-label="Collapse panel">
            <svg width="5" height="8" viewBox="0 0 5 8"><path d="M5 0v8L0 4z" fill="#222" /></svg>
          </button>
        </div>
        <main className="min-w-0 flex-1">
          <Banner />
          <div className="pt-[56px] pr-[13px] pl-3">
            <p className="mb-[40px] text-[17px] leading-[23px]">
              <b>Chú ý:</b> số lượng sinh viên đăng ký mỗi lớp được cập nhật 60 phút một lần.
            </p>
            <ClassTable />
            <FilterBar />
          </div>
        </main>
      </div>
      <footer className="h-[64px] border-t border-[#c8c8c8] bg-[#336699] pt-[2px] pl-5 text-center text-[17px] leading-[23px] text-[#ffe4b5]">
        <p>Trường Đại học Bách Khoa Hà Nội</p>
        <p>Địa chỉ: Số 1 Đại Cồ Việt, Hai Bà Trưng, Hà Nội</p>
      </footer>
      <Taskbar />
    </div>
  );
}
